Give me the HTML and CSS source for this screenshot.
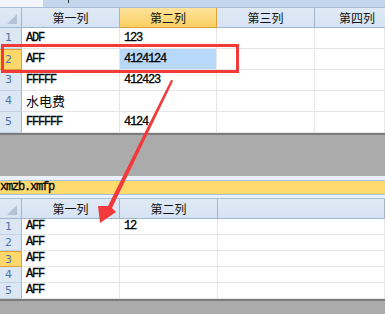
FILE: index.html
```html
<!DOCTYPE html>
<html lang="zh-CN">
<head>
    <meta charset="UTF-8">
    <title>xmzb.xmfp</title>
    <link rel="stylesheet" href="styles.css">
</head>
<body>
    <div class="page">
        <div class="tab-strip">
            <div class="tab"></div>
            <span class="tab-mark"></span>
        </div>

        <!-- 上面的表格 -->
        <div class="sheet sheet-top">
            <div class="hd corner"><span class="tri"></span></div>
            <div class="hd">第一列</div>
            <div class="hd hd-active">第二列</div>
            <div class="hd">第三列</div>
            <div class="hd hd-right">第四列</div>

            <div class="rh">1</div><div class="c">ADF</div><div class="c">123</div><div class="c"></div><div class="c"></div>
            <div class="rh rh-active">2</div><div class="c">AFF</div><div class="c c-sel">4124124</div><div class="c"></div><div class="c"></div>
            <div class="rh">3</div><div class="c">FFFFF</div><div class="c">412423</div><div class="c"></div><div class="c"></div>
            <div class="rh">4</div><div class="c cn">水电费</div><div class="c"></div><div class="c"></div><div class="c"></div>
            <div class="rh">5</div><div class="c">FFFFFF</div><div class="c">4124</div><div class="c"></div><div class="c"></div>
        </div>

        <div class="gap"></div>

        <div class="file-bar">
            <div class="file-name">xmzb.xmfp</div>
        </div>

        <!-- 下面的表格 -->
        <div class="sheet sheet-bottom">
            <div class="hd corner"><span class="tri"></span></div>
            <div class="hd">第一列</div>
            <div class="hd">第二列</div>
            <div class="hd"></div>

            <div class="rh">1</div><div class="c">AFF</div><div class="c">12</div><div class="c"></div>
            <div class="rh">2</div><div class="c">AFF</div><div class="c"></div><div class="c"></div>
            <div class="rh rh-active">3</div><div class="c">AFF</div><div class="c"></div><div class="c"></div>
            <div class="rh">4</div><div class="c">AFF</div><div class="c"></div><div class="c"></div>
            <div class="rh">5</div><div class="c">AFF</div><div class="c"></div><div class="c"></div>
        </div>

        <div class="gap-bottom"></div>

        <!-- 标注：红框和箭头 -->
        <svg class="note" width="385" height="314" viewBox="0 0 385 314">
            <rect x="2.5" y="45.5" width="235" height="26" fill="none" stroke="#f23a3a" stroke-width="3"/>
            <polygon points="172,80 173,81 112,208 116,212 100,223 98,206 108,206 171,80" fill="#f23a3a"/>
        </svg>
    </div>
</body>
</html>
```
FILE: styles.css
```css
* {
    box-sizing: border-box;
}

body {
    margin: 0;
    padding: 0;
    overflow: hidden;
    background: #fff;
    font-family: "Liberation Mono", monospace;
}

.page {
    position: relative;
    width: 385px;
    height: 314px;
    overflow: hidden;
}

.tab-strip {
    display: flex;
    height: 8px;
    background: #c4d6eb;
    border-bottom: 1px solid #a9bfd8;
}

.tab {
    width: 43px;
    background: #f3f7fc;
}

.tab-mark {
    width: 1px;
    height: 3px;
    margin-left: 25px;
    background: #333;
}

.sheet {
    display: grid;
}

.sheet-top {
    grid-template-columns: 22px 98px 97px 98px 1fr;
    grid-template-rows: 20px repeat(5, 21px);
}

.sheet-bottom {
    grid-template-columns: 22px 98px 98px 1fr;
    grid-template-rows: 20px repeat(5, 16px);
}

.hd {
    background: linear-gradient(#e0eaf6, #d6e3f2);
    border-right: 1px solid #9fb6cf;
    border-bottom: 1px solid #9fb6cf;
    font-family: "Noto Sans CJK SC", sans-serif;
    font-size: 12px;
    line-height: 19px;
    text-align: center;
    color: #111;
}

.hd-right {
    text-align: right;
    padding-right: 10px;
    border-right: none;
}

.hd-active {
    background: linear-gradient(#ffe39b, #f9cf62);
    border-bottom: 1px solid #e0a23c;
    border-right: 1px solid #e0a23c;
}

.corner {
    position: relative;
}

.tri {
    position: absolute;
    right: 4px;
    bottom: 3px;
    width: 0;
    height: 0;
    border-left: 10px solid transparent;
    border-bottom: 10px solid #b3c3d6;
}

.rh {
    background: #dce7f4;
    border-right: 1px solid #9fb6cf;
    border-bottom: 1px solid #c2d2e4;
    color: #4a74a8;
    font-family: "DejaVu Sans", sans-serif;
    font-size: 11px;
    text-align: center;
    padding-right: 4px;
}

.sheet-top .rh {
    line-height: 20px;
}

.sheet-bottom .rh {
    line-height: 15px;
}

.rh-active {
    background: #ffd86c;
    border: 1px solid #dd9f3a;
    border-left: none;
}

.c {
    border-right: 1px solid #e6e6e6;
    border-bottom: 1px solid #e6e6e6;
    font-size: 12px;
    letter-spacing: -1.2px;
    color: #000;
    padding-left: 4px;
    -webkit-text-stroke: 0.3px #000;
}

.sheet-top .c {
    line-height: 20px;
}

.sheet-bottom .c {
    line-height: 15px;
}

.c-sel {
    background: #b8d8f9;
}

.cn {
    font-family: "Noto Sans CJK SC", sans-serif;
    letter-spacing: 0;
    font-size: 13px;
    -webkit-text-stroke: 0;
}

.gap {
    height: 43px;
    background: #ababab;
    border-top: 2px solid #7c7c7c;
}

.file-bar {
    background: #e9f0fa;
    padding: 4px 0 3px;
    border-bottom: 1px solid #a9bfd8;
}

.file-name {
    background: #ffda6e;
    border-top: 1px solid #a9c0da;
    border-bottom: 1px solid #a9c0da;
    height: 15px;
    font-size: 12px;
    letter-spacing: -1.2px;
    line-height: 13px;
    -webkit-text-stroke: 0.3px #000;
}

.gap-bottom {
    height: 20px;
    background: #ababab;
    border-top: 2px solid #7c7c7c;
}

.note {
    position: absolute;
    left: 0;
    top: 0;
}
```
